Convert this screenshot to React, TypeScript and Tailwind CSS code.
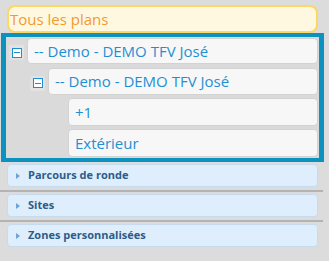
import React from "react";

function MinusIcon() {
  return (
    <div className="w-[15px] h-[15px] flex items-center justify-center rounded-[2px] bg-[#e2e2e2]">
      <div className="w-[10px] h-[10px] border border-[#1d8fd1] bg-white flex items-center justify-center">
        <div className="w-[6px] h-[1px] bg-[#1d8fd1]" />
      </div>
    </div>
  );
}

function Row({ indent, icon, text, h }: { indent: string; icon: boolean; text: string; h: string }) {
  return (
    <div className={`flex ${indent} ${h}`}>
      <div className="w-[21px] flex items-center pl-[3px] pt-[3px]">{icon ? <MinusIcon /> : null}</div>
      <div className="flex-1 flex items-center pl-[6px] bg-[#f7f7f7] border border-[#d2d2d2] rounded-[4px] text-[15px] text-[#1f8fd2]">
        {text}
      </div>
    </div>
  );
}

function Header({ text }: { text: string }) {
  return (
    <div className="ml-[7px] w-[311px] h-[23px] flex items-center bg-[#dfeefc] border border-[#c6dbee] rounded-[4px] pl-[8px]">
      <div className="w-0 h-0 border-y-[3px] border-y-transparent border-l-[4px] border-l-[#6ca3d9]" />
      <span className="ml-[8px] text-[11px] font-bold text-[#2d5b8a]">{text}</span>
    </div>
  );
}

export default function App() {
  return (
    <div
      className="w-[329px] h-[261px] bg-[#dcdcdc] overflow-hidden pt-[5px]"
      style={{ fontFamily: '"Open Sans", "Liberation Sans", sans-serif' }}
    >
      <div className="ml-[7px] w-[311px] h-[28px] rounded-[8px] border-2 border-[#fdd663] bg-[#fff8e1] flex items-center pl-[1px] text-[15px] text-[#f29a2e]">
        Tous les plans
      </div>
      <div className="ml-[1px] w-[323px] border-x-[5px] border-t-[4px] border-b-[4px] border-[#0b92bf] bg-[#dadada] pt-[1px] pb-[1px] pr-[1px] flex flex-col">
        <Row indent="" icon={true} text="-- Demo - DEMO TFV José" h="h-[26px]" />
        <div className="h-[4px]" />
        <Row indent="pl-[21px]" icon={true} text="-- Demo - DEMO TFV José" h="h-[27px]" />
        <div className="h-[3px]" />
        <Row indent="pl-[41px]" icon={false} text="+1" h="h-[28px]" />
        <div className="h-[3px]" />
        <Row indent="pl-[41px]" icon={false} text="Extérieur" h="h-[28px]" />
      </div>
      <div className="mt-[2px]">
        <Header text="Parcours de ronde" />
        <div className="w-[323px] h-[2px] bg-[#b3b3b3] mt-[3px] mb-[2px]" />
        <Header text="Sites" />
        <div className="w-[323px] h-[2px] bg-[#b3b3b3] mt-[3px] mb-[2px]" />
        <Header text="Zones personnalisées" />
      </div>
    </div>
  );
}
